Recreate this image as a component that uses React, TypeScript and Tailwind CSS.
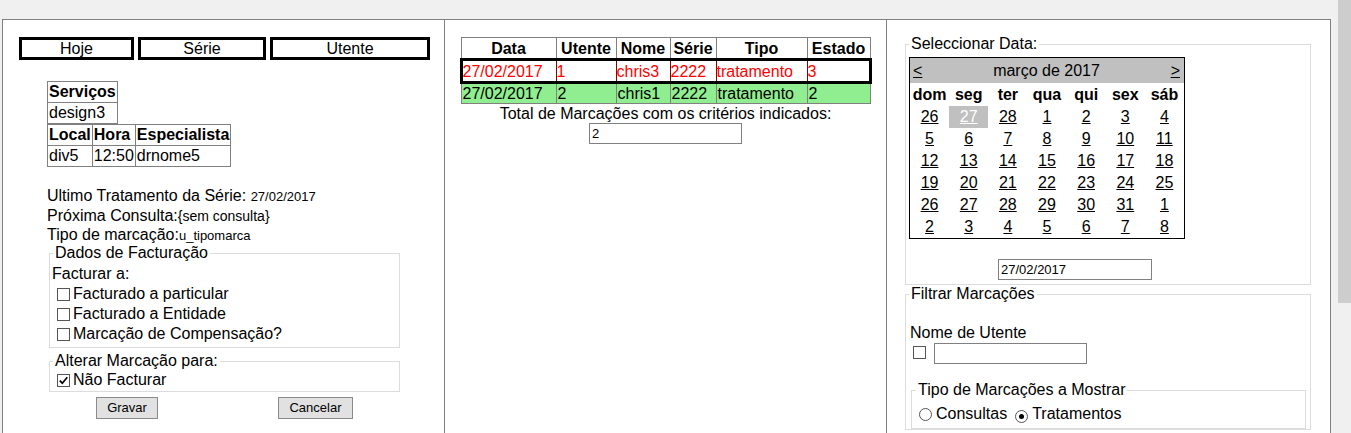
import React from "react";

const WEEK = ["dom", "seg", "ter", "qua", "qui", "sex", "sáb"];

const DAYS: string[][] = [
  ["26", "27", "28", "1", "2", "3", "4"],
  ["5", "6", "7", "8", "9", "10", "11"],
  ["12", "13", "14", "15", "16", "17", "18"],
  ["19", "20", "21", "22", "23", "24", "25"],
  ["26", "27", "28", "29", "30", "31", "1"],
  ["2", "3", "4", "5", "6", "7", "8"],
];

const ROWS = [
  { data: "27/02/2017", utente: "1", nome: "chris3", serie: "2222", tipo: "tratamento", estado: "3" },
  { data: "27/02/2017", utente: "2", nome: "chris1", serie: "2222", tipo: "tratamento", estado: "2" },
];

function Box({ checked }: { checked?: boolean }) {
  return (
    <span className="inline-flex h-[13px] w-[13px] shrink-0 items-center justify-center border border-[#555] bg-white">
      {checked && (
        <svg viewBox="0 0 11 11" className="h-[11px] w-[11px]">
          <path d="M1.8 5.6 L4.3 8.2 L9.3 2.2" fill="none" stroke="#000" strokeWidth="1.7" />
        </svg>
      )}
    </span>
  );
}

function Radio({ checked }: { checked?: boolean }) {
  return (
    <span className="inline-flex h-[13px] w-[13px] shrink-0 items-center justify-center rounded-full border border-[#555] bg-white">
      {checked && <span className="h-[5px] w-[5px] rounded-full bg-black" />}
    </span>
  );
}

function LeftColumn() {
  return (
    <div className="pt-[17px]">
      {/* tabs */}
      <div className="flex gap-[4px] pl-[16px]">
        <div className="h-[23px] w-[115px] border-[3px] border-black text-center leading-[17px]">Hoje</div>
        <div className="h-[23px] w-[128px] border-[3px] border-black text-center leading-[17px]">Série</div>
        <div className="h-[23px] w-[160px] border-[3px] border-black text-center leading-[17px]">Utente</div>
      </div>

      {/* appointment detail */}
      <div className="ml-[44px] mt-[21px]">
        <table className="border-collapse border border-[#808080] leading-[20px]">
          <tbody>
            <tr>
              <th className="border border-[#808080] px-px text-left font-bold">Serviços</th>
            </tr>
            <tr>
              <td className="border border-[#808080] px-px">design3</td>
            </tr>
          </tbody>
        </table>
        <table className="border-collapse border border-[#808080] leading-[20px]">
          <tbody>
            <tr>
              <th className="border border-[#808080] px-px text-left font-bold">Local</th>
              <th className="border border-[#808080] px-px text-left font-bold">Hora</th>
              <th className="border border-[#808080] px-px text-left font-bold">Especialista</th>
            </tr>
            <tr>
              <td className="border border-[#808080] px-px">div5</td>
              <td className="border border-[#808080] px-px">12:50</td>
              <td className="border border-[#808080] px-px">drnome5</td>
            </tr>
          </tbody>
        </table>
      </div>

      <div className="ml-[44px] mt-[19px]">
        <div className="leading-[19px]">
          Ultimo Tratamento da Série: <span className="text-[13px]">27/02/2017</span>
        </div>
        <div className="leading-[19px]">
          Próxima Consulta:<span className="text-[14px]">{"{sem consulta}"}</span>
        </div>
        <div className="leading-[17px]">
          Tipo de marcação:<span className="text-[13px]">u_tipomarca</span>
        </div>
      </div>

      <fieldset className="ml-[46px] w-[351px] border border-[#dcdcdc] pb-[3px] pl-[2px]">
        <legend className="ml-px px-[2px] leading-[18px]">Dados de Facturação</legend>
        <div className="mt-[2px] leading-[20px]">Facturar a:</div>
        {["Facturado a particular", "Facturado a Entidade", "Marcação de Compensação?"].map((t) => (
          <div key={t} className="flex h-[20px] items-center gap-[3px] pl-[5px]">
            <Box />
            <span>{t}</span>
          </div>
        ))}
      </fieldset>

      <fieldset className="ml-[46px] mt-[4px] w-[351px] border border-[#dcdcdc] pb-px pl-[2px]">
        <legend className="ml-px px-[2px] leading-[18px]">Alterar Marcação para:</legend>
        <div className="flex h-[20px] items-center gap-[3px] pl-[5px]">
          <Box checked />
          <span>Não Facturar</span>
        </div>
      </fieldset>

      <div className="mt-[5px] flex pl-[93px]">
        <button className="h-[22px] w-[62px] border border-[#8a8a8a] bg-[#e1e1e1] text-[13px]">Gravar</button>
        <button className="ml-[120px] h-[22px] w-[75px] border border-[#8a8a8a] bg-[#e1e1e1] text-[13px]">Cancelar</button>
      </div>
    </div>
  );
}

function MiddleColumn() {
  return (
    <div className="flex flex-col items-center pt-[17px]">
      <table className="w-[409px] table-fixed border-collapse border border-[#808080] leading-[19px]">
        <colgroup>
          <col className="w-[95px]" />
          <col className="w-[60px]" />
          <col className="w-[54px]" />
          <col className="w-[46px]" />
          <col className="w-[91px]" />
          <col className="w-[63px]" />
        </colgroup>
        <thead>
          <tr className="h-[22px]">
            {["Data", "Utente", "Nome", "Série", "Tipo", "Estado"].map((h) => (
              <th key={h} className="border border-[#808080] p-0 text-center font-bold">
                {h}
              </th>
            ))}
          </tr>
        </thead>
        <tbody>
          {ROWS.map((r, i) => {
            const cells = [r.data, r.utente, r.nome, r.serie, r.tipo, r.estado];
            return i === 0 ? (
              <tr key={i} className="h-[23px] border-[3px] border-black text-[#ff0000]">
                {cells.map((c, j) => (
                  <td key={j} className="border border-[#8b0000] p-0 whitespace-nowrap">
                    {c}
                  </td>
                ))}
              </tr>
            ) : (
              <tr key={i} className="h-[21px] bg-[#90ee90]">
                {cells.map((c, j) => (
                  <td key={j} className="border border-[#808080] px-px py-0 whitespace-nowrap">
                    {c}
                  </td>
                ))}
              </tr>
            );
          })}
        </tbody>
      </table>
      <div className="leading-[19px]">Total de Marcações com os critérios indicados:</div>
      <input
        readOnly
        value="2"
        className="h-[21px] w-[153px] border border-[#808080] px-[2px] text-[13px] outline-none"
      />
    </div>
  );
}

function Calendar() {
  return (
    <div className="mt-[4px] w-[276px] border border-black">
      <div className="flex h-[25px] items-center justify-between bg-[#c0c0c0] pl-[3px] pr-[4px]">
        <span className="underline">&lt;</span>
        <span>março de 2017</span>
        <span className="underline">&gt;</span>
      </div>
      <div className="grid h-[23px] grid-cols-7 items-center text-center font-bold">
        {WEEK.map((d) => (
          <span key={d}>{d}</span>
        ))}
      </div>
      {DAYS.map((week, wi) => (
        <div key={wi} className="grid h-[22px] grid-cols-7 text-center">
          {week.map((d, di) => {
            const selected = wi === 0 && di === 1;
            return (
              <span
                key={di}
                className={
                  selected
                    ? "bg-[#c0c0c0] leading-[22px] text-white underline"
                    : "leading-[22px] underline"
                }
              >
                {d}
              </span>
            );
          })}
        </div>
      ))}
    </div>
  );
}

function RightColumn() {
  return (
    <div className="pl-[18px] pt-[15px]">
      <fieldset className="w-[406px] border border-[#dcdcdc] pb-[4px] pl-[3px]">
        <legend className="px-[2px] leading-[18px]">Seleccionar Data:</legend>
        <Calendar />
        <input
          readOnly
          value="27/02/2017"
          className="ml-[89px] mt-[20px] block h-[21px] w-[154px] border border-[#808080] px-[2px] text-[13px] outline-none"
        />
      </fieldset>

      <fieldset className="w-[406px] border border-[#dcdcdc] pl-[3px]">
        <legend className="px-[2px] leading-[18px]">Filtrar Marcações</legend>
        <div className="mt-[20px] pl-px leading-[20px]">Nome de Utente</div>
        <div className="flex h-[21px] items-center">
          <span className="ml-[4px]">
            <Box />
          </span>
          <input readOnly className="ml-[8px] h-[21px] w-[153px] border border-[#808080] outline-none" />
        </div>
        <fieldset className="ml-[2px] mt-[17px] w-[395px] border border-[#dcdcdc] pb-[4px] pl-[4px]">
          <legend className="px-[2px] leading-[18px]">Tipo de Marcações a Mostrar</legend>
          <div className="mt-[5px] flex h-[20px] items-center pl-[3px]">
            <Radio />
            <span className="ml-[4px]">Consultas</span>
            <span className="ml-[8px]">
              <Radio checked />
            </span>
            <span className="ml-[4px]">Tratamentos</span>
          </div>
        </fieldset>
      </fieldset>
    </div>
  );
}

export default function App() {
  return (
    <div className="flex h-[433px] overflow-hidden bg-[#f0f0f0] font-['Liberation_Sans',Arial,sans-serif] text-[16px] text-black">
      <div className="pl-[2px] pt-[19px]">
        <div className="grid h-[440px] grid-cols-[442px_442px_443px] divide-x divide-[#808080] border border-[#808080] bg-white">
          <LeftColumn />
          <MiddleColumn />
          <RightColumn />
        </div>
      </div>
      {/* scrollbar */}
      <div className="ml-[7px] flex w-[13px] flex-col">
        <div className="h-[303px] bg-[#cdcdcd]" />
        <div className="flex-1 bg-[#f0f0f0]" />
      </div>
    </div>
  );
}
